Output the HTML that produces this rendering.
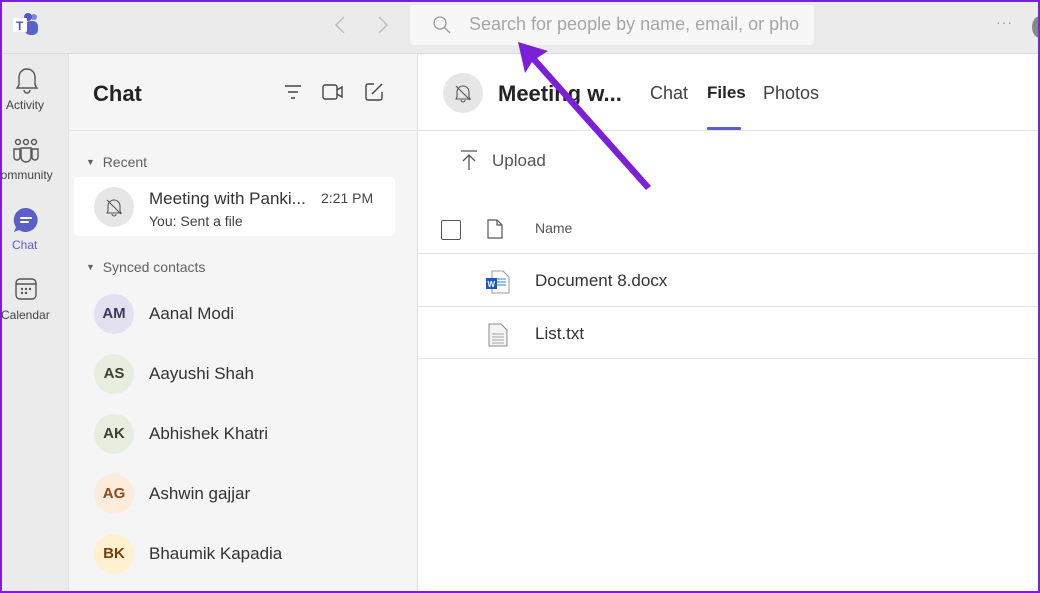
<!DOCTYPE html>
<html><head><meta charset="utf-8"><style>
*{box-sizing:border-box;margin:0;padding:0}
body{width:1040px;height:593px;overflow:hidden;font-family:"Segoe UI","Liberation Sans",sans-serif;background:#fff;position:relative;color:#242424}
.abs{position:absolute}
.top{left:0;top:0;width:1040px;height:54px;background:#ebebeb;border-bottom:1px solid #dcdcdc}
.rail{left:0;top:54px;width:68px;height:539px;background:#ebebeb}
.list{left:68px;top:54px;width:350px;height:539px;background:#f5f5f5;border-left:1px solid #e2e2e2;border-right:1px solid #e0e0e0}
.main{left:418px;top:54px;width:622px;height:539px;background:#fff}
.av{width:40px;height:40px;border-radius:50%;font-size:15px;font-weight:bold;text-align:center;line-height:40px;left:94px}
.nm{left:149px;font-size:17px;color:#333}
.hr{height:1px;background:#e3e3e3}
</style></head><body>
<div class="abs top"></div>
<svg class="abs" style="left:12px;top:12px" width="28" height="26" viewBox="0 0 28 26">
<circle cx="22" cy="5" r="3" fill="#7b83eb"/><circle cx="16" cy="5" r="4" fill="#5059c9"/>
<rect x="13" y="9" width="13" height="14" rx="5" fill="#5b62c8"/>
<rect x="1" y="6" width="14" height="14" rx="1" fill="#fff"/>
<text x="4" y="18" font-size="12" font-weight="bold" fill="#4b53bc" font-family="Liberation Sans">T</text></svg>
<svg class="abs" style="left:334px;top:15px" width="12" height="20" viewBox="0 0 12 20" fill="none" stroke="#b8b8b8" stroke-width="1.3"><path d="M10 2L2 10l8 8"/></svg>
<svg class="abs" style="left:377px;top:15px" width="12" height="20" viewBox="0 0 12 20" fill="none" stroke="#b8b8b8" stroke-width="1.3"><path d="M2 2l8 8-8 8"/></svg>
<div class="abs" style="left:410px;top:5px;width:404px;height:40px;background:#f7f7f7;border-radius:4px"></div>
<svg class="abs" style="left:432px;top:15px" width="20" height="20" viewBox="0 0 20 20" fill="none" stroke="#9a9a9a" stroke-width="1.3"><circle cx="8" cy="8" r="6"/><path d="M12.5 12.5L18 18"/></svg>
<div class="abs" style="left:469px;top:14px;font-size:18px;color:#a6a6a6;white-space:nowrap;width:330px;overflow:hidden">Search for people by name, email, or phone</div>
<div class="abs" style="left:996px;top:14px;color:#999;font-size:14px;letter-spacing:1px">&middot;&middot;&middot;</div>
<div class="abs" style="left:1032px;top:16px;width:16px;height:22px;border-radius:50%;background:#888"></div>

<div class="abs rail"></div>
<svg class="abs" style="left:14px;top:66px" width="26" height="28" viewBox="0 0 26 28" fill="none" stroke="#555" stroke-width="1.4"><path d="M5 19V11a8 8 0 0116 0v8l2 3H3z"/><path d="M10 24a3 3 0 006 0"/></svg>
<div class="abs" style="left:6px;top:98px;font-size:12px;color:#424242">Activity</div>
<svg class="abs" style="left:12px;top:137px" width="28" height="28" viewBox="0 0 28 28" fill="none" stroke="#555" stroke-width="1.4"><circle cx="6" cy="5" r="2.5"/><circle cx="14" cy="5" r="2.5"/><circle cx="22" cy="5" r="2.5"/><path d="M2 12h6v8a3 3 0 01-6 0z M20 12h6v8a3 3 0 01-6 0z M9 11h10v9a5 5 0 01-10 0z"/></svg>
<div class="abs" style="left:0;top:168px;font-size:12px;color:#424242;width:60px;overflow:hidden;white-space:nowrap;text-indent:-8px">Community</div>
<svg class="abs" style="left:13px;top:207px" width="26" height="28" viewBox="0 0 26 28"><path d="M13 1a12 12 0 11-7 22l-5 2 2-5A12 12 0 0113 1z" fill="#5b5fc7"/><path d="M8 11h10M8 15h7" stroke="#fff" stroke-width="2" stroke-linecap="round"/></svg>
<div class="abs" style="left:12px;top:238px;font-size:12px;color:#5b5fc7">Chat</div>
<svg class="abs" style="left:14px;top:277px" width="24" height="24" viewBox="0 0 24 24" fill="none" stroke="#555" stroke-width="1.4"><rect x="2" y="2" width="20" height="20" rx="4"/><path d="M2 7h20"/><g fill="#555" stroke="none"><circle cx="8" cy="12" r="1.2"/><circle cx="12" cy="12" r="1.2"/><circle cx="16" cy="12" r="1.2"/><circle cx="8" cy="16" r="1.2"/><circle cx="12" cy="16" r="1.2"/></g></svg>
<div class="abs" style="left:1px;top:308px;font-size:12px;color:#424242">Calendar</div>

<div class="abs list"></div>
<div class="abs" style="left:93px;top:81px;font-size:22px;font-weight:bold;color:#242424">Chat</div>
<svg class="abs" style="left:284px;top:84px" width="18" height="16" viewBox="0 0 18 16" stroke="#444" stroke-width="1.4"><path d="M1 2h16M4 8h10M7 14h4"/></svg>
<svg class="abs" style="left:322px;top:83px" width="22" height="18" viewBox="0 0 22 18" fill="none" stroke="#444" stroke-width="1.4"><rect x="1" y="2" width="14" height="14" rx="2"/><path d="M15 7l5-3v10l-5-3"/></svg>
<svg class="abs" style="left:364px;top:82px" width="20" height="20" viewBox="0 0 20 20" fill="none" stroke="#444" stroke-width="1.4"><path d="M10 2H4a2 2 0 00-2 2v12a2 2 0 002 2h12a2 2 0 002-2v-6"/><path d="M8 12l10-10"/></svg>
<div class="abs hr" style="left:68px;top:130px;width:350px"></div>
<div class="abs" style="left:86px;top:154px;font-size:14px;color:#616161"><span style="font-size:9px;vertical-align:2px">&#9660;</span>&nbsp; Recent</div>
<div class="abs" style="left:74px;top:177px;width:321px;height:59px;background:#fff;border-radius:4px"></div>
<div class="abs" style="left:94px;top:187px;width:40px;height:40px;border-radius:50%;background:#e6e6e6"></div>
<svg class="abs" style="left:104px;top:197px" width="20" height="20" viewBox="0 0 20 20" fill="none" stroke="#555" stroke-width="1.1"><path d="M4 14V9a6 6 0 0112 0v5l1 2H3z"/><path d="M8 17a2 2 0 004 0"/><path d="M3 3l14 14"/></svg>
<div class="abs" style="left:149px;top:189px;font-size:17px;color:#333">Meeting with Panki...</div>
<div class="abs" style="left:321px;top:190px;font-size:14px;color:#444">2:21 PM</div>
<div class="abs" style="left:149px;top:213px;font-size:14px;color:#424242">You: Sent a file</div>
<div class="abs" style="left:86px;top:259px;font-size:14px;color:#616161"><span style="font-size:9px;vertical-align:2px">&#9660;</span>&nbsp; Synced contacts</div>
<div class="abs av" style="top:294px;background:#e3e0f1;color:#3c3a57">AM</div><div class="abs nm" style="top:304px">Aanal Modi</div>
<div class="abs av" style="top:354px;background:#e7eee0;color:#384233">AS</div><div class="abs nm" style="top:364px">Aayushi Shah</div>
<div class="abs av" style="top:414px;background:#e7eee0;color:#384233">AK</div><div class="abs nm" style="top:424px">Abhishek Khatri</div>
<div class="abs av" style="top:474px;background:#fdebdb;color:#8a4a17">AG</div><div class="abs nm" style="top:484px">Ashwin gajjar</div>
<div class="abs av" style="top:534px;background:#fdf1cf;color:#7a3e10">BK</div><div class="abs nm" style="top:544px">Bhaumik Kapadia</div>

<div class="abs main"></div>
<div class="abs" style="left:443px;top:73px;width:40px;height:40px;border-radius:50%;background:#e6e6e6"></div>
<svg class="abs" style="left:453px;top:83px" width="20" height="20" viewBox="0 0 20 20" fill="none" stroke="#555" stroke-width="1.1"><path d="M4 14V9a6 6 0 0112 0v5l1 2H3z"/><path d="M8 17a2 2 0 004 0"/><path d="M3 3l14 14"/></svg>
<div class="abs" style="left:498px;top:81px;font-size:22px;font-weight:bold;color:#242424">Meeting w...</div>
<div class="abs" style="left:650px;top:83px;font-size:18px;color:#424242">Chat</div>
<div class="abs" style="left:707px;top:83px;font-size:17px;font-weight:bold;color:#242424">Files</div>
<div class="abs" style="left:707px;top:127px;width:34px;height:3px;background:#5b5fc7;border-radius:1px"></div>
<div class="abs" style="left:763px;top:83px;font-size:18px;color:#424242">Photos</div>
<div class="abs hr" style="left:418px;top:130px;width:622px"></div>
<svg class="abs" style="left:459px;top:149px" width="20" height="22" viewBox="0 0 20 22" fill="none" stroke="#555" stroke-width="1.3"><path d="M2 2h16M10 6v15M4 12l6-6 6 6"/></svg>
<div class="abs" style="left:492px;top:151px;font-size:17px;color:#555">Upload</div>
<div class="abs" style="left:441px;top:220px;width:20px;height:20px;border:1.5px solid #555;border-radius:2px"></div>
<svg class="abs" style="left:487px;top:219px" width="16" height="20" viewBox="0 0 16 20" fill="none" stroke="#555" stroke-width="1.2"><path d="M1 1h9l5 5v13H1z M10 1v5h5"/></svg>
<div class="abs" style="left:535px;top:220px;font-size:14px;color:#555">Name</div>
<div class="abs hr" style="left:418px;top:253px;width:622px"></div>
<svg class="abs" style="left:485px;top:270px" width="26" height="24" viewBox="0 0 26 24"><path d="M7 1h11l6 6v16H7z" fill="#fff" stroke="#999"/><path d="M12 9h9M12 12h9M12 15h9" stroke="#2b7cd3"/><rect x="1" y="8" width="11" height="11" fill="#185abd"/><text x="2.5" y="17" font-size="8" fill="#fff" font-family="Liberation Sans" font-weight="bold">W</text></svg>
<div class="abs" style="left:535px;top:271px;font-size:17px;color:#333">Document 8.docx</div>
<div class="abs hr" style="left:418px;top:306px;width:622px"></div>
<svg class="abs" style="left:488px;top:323px" width="20" height="24" viewBox="0 0 20 24" fill="#f4f4f4" stroke="#888"><path d="M1 1h12l6 6v16H1z"/><path d="M4 11h12M4 14h12M4 17h12M4 20h12" stroke-width=".8"/></svg>
<div class="abs" style="left:535px;top:324px;font-size:17px;color:#333">List.txt</div>
<div class="abs hr" style="left:418px;top:358px;width:622px"></div>

<svg class="abs" style="left:0;top:0" width="1040" height="593"><polygon points="518,42 548,51 537,58 651,186 646,190 532,62 525,73" fill="#7b1fd8"/></svg>
<div class="abs" style="left:0;top:0;width:1040px;height:593px;border:2px solid #7b1fd8"></div>
</body></html>
